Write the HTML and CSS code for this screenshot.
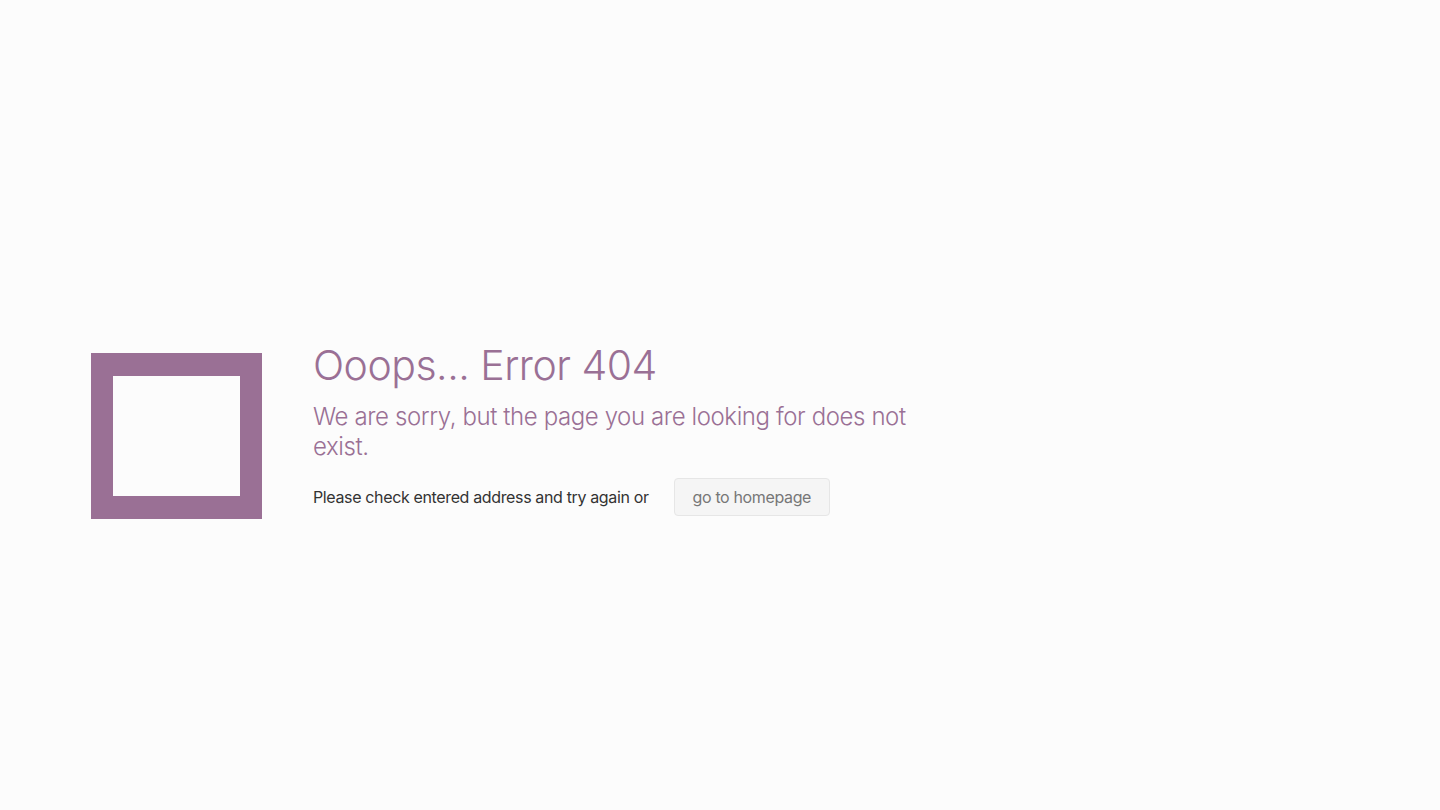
FILE: index.html
```html
<!DOCTYPE html>
<html lang="en">
<head>
  <meta charset="UTF-8">
  <title>Error 404</title>
  <link rel="stylesheet" href="styles.css">
</head>
<body>

<div class="error-page">
  <div class="error-logo"></div>
  <div class="error-content">
    <h1>Ooops... Error 404</h1>
    <h2>We are sorry, but the page you are looking for does not exist.</h2>
    <p class="error-hint">
      Please check entered address and try again or
      <a class="home-btn" href="#">go to homepage</a>
    </p>
  </div>
</div>

</body>
</html>
```

FILE: styles.css
```css
html, body {
  margin: 0;
  height: 100%;
}
body {
  font-family: Inter, "Noto Sans", sans-serif;
  background-color: #fcfcfc;
  color: #333;
}
.error-page {
  display: flex;
  align-items: flex-start;
  padding: 353px 0 0 91px;
  gap: 51px;
}
.error-logo {
  width: 127px;
  height: 120px;
  border: 22px solid #9a7095;
  border-top-width: 23px;
  border-bottom-width: 23px;
  flex-shrink: 0;
}
.error-content {
  width: 600px;
  margin-top: -14px;
}
.error-content h1 {
  margin: 0;
  font-size: 41px;
  font-weight: 300;
  line-height: 52px;
  letter-spacing: -0.5px;
  color: #9a7095;
}
.error-content h2 {
  margin: 11px 0 0;
  font-size: 24px;
  font-weight: 300;
  line-height: 30px;
  letter-spacing: -0.4px;
  color: #9a7095;
}
.error-hint {
  margin: 16px 0 0;
  font-size: 16px;
  letter-spacing: -0.36px;
  display: flex;
  align-items: center;
  gap: 25px;
}
.home-btn {
  display: inline-block;
  padding: 8px 18px;
  background-color: #f5f5f5;
  border: 1px solid #e6e6e6;
  border-radius: 4px;
  color: #777;
  text-decoration: none;
  line-height: 20px;
}
```
